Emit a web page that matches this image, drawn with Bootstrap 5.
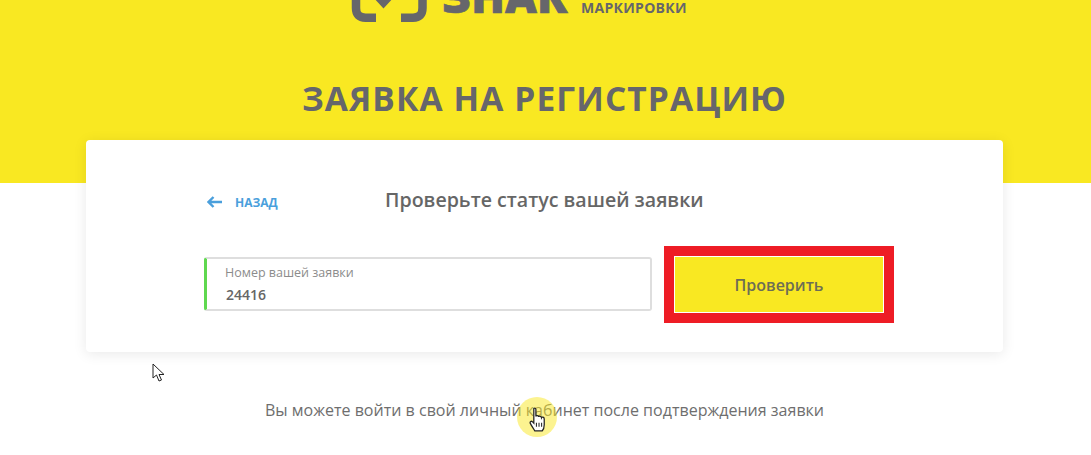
<!DOCTYPE html>
<html lang="ru">
<head>
    <meta charset="UTF-8">
    <meta name="viewport" content="width=device-width, initial-scale=1.0">
    <title>Заявка на регистрацию</title>
    <link href="https://cdn.jsdelivr.net/npm/bootstrap@5.3.0/dist/css/bootstrap.min.css" rel="stylesheet">
    <style>
        html, body { height: 455px; overflow: hidden; }
        body { font-family: "Open Sans", "Liberation Sans", sans-serif; color: #666; background: #fff; position: relative; }
        .hero { height: 183px; background: #f9e822; }
        .logo-strip { height: 22px; overflow: hidden; padding-left: 351px; gap: 15px; }
        .logo-word { font-size: 44px; font-weight: 800; line-height: 32px; color: #66666b; margin-bottom: 10px; flex: none; width: 125px; -webkit-text-stroke: .6px #66666b; }
        .logo-sub { font-size: 14px; font-weight: 700; line-height: 16px; letter-spacing: .3px; color: #66666b; margin-bottom: 6px; margin-left: -1px; white-space: nowrap; }
        .hero-title { font-size: 33.5px; font-weight: 700; letter-spacing: 1.1px; color: #66666b; line-height: 46px; margin: 53px 2px 0 0; }
        .form-panel { margin: -43px 88px 0 86px; height: 212px; border-radius: 4px; box-shadow: 0 2px 14px rgba(0, 0, 0, .09); padding: 48px 109px 0 118px; position: relative; }
        .back-link { width: 181px; font-size: 12px; font-weight: 700; color: #4a9fdc; text-decoration: none; padding: 5px 0 0 3px; gap: 13px; }
        .back-link svg { margin-bottom: 2px; }
        .panel-title { font-size: 19.6px; font-weight: 600; line-height: 26px; margin: -1px 0 0; color: #666; }
        .check-row { margin-top: 33px; }
        .status-field { width: 448px; height: 54px; margin-top: 11px; border: 2px solid #dedede; border-left: 3px solid #5fd84f; border-radius: 3px; padding: 5px 0 0 18px; }
        .status-field label { display: block; font-size: 12.5px; line-height: 17px; color: #8c8c8c; }
        .status-field input { display: block; width: 100%; border: 0; outline: 0; padding: 3px 0 0 1px; background: transparent; font-size: 14px; font-weight: 600; line-height: 22px; color: #666; }
        .check-frame { width: 230px; height: 77px; margin-left: 12px; border: 10px solid #ee1c25; flex: none; }
        .check-btn { width: 100%; height: 100%; border: 1px solid #fff; border-radius: 0; background: #f9e822; color: #6d6d55; font-size: 16px; font-weight: 600; padding: 1px 0 0; }
        .check-btn:hover { background: #f9e822; color: #6d6d55; }
        .after-note { font-size: 16.05px; line-height: 22px; margin: 47px 2px 0 0; color: #6e6e6e; }
        .click-spot { position: absolute; left: 517px; top: 397px; width: 40px; height: 40px; border-radius: 50%; background: rgba(249, 232, 34, .5); }
        .cursor-arrow { position: absolute; left: 152px; top: 363px; }
        .cursor-hand { position: absolute; left: 528px; top: 407px; }
    </style>
</head>
<body>
    <div class="hero">
        <div class="logo-strip d-flex align-items-end">
            <svg width="76" height="34" viewBox="0 0 76 34" class="flex-shrink-0" fill="none" stroke="#66666b" stroke-width="8.500">
                <path d="M5 0V20Q5 29.700 14.500 29.700H25"/>
                <path d="M71.500 0V20Q71.500 29.700 62 29.700H50"/>
                <path d="M26 9L32.500 16L39 9" stroke-width="6"/>
            </svg>
            <div class="logo-word">ЗНАК</div>
            <div class="logo-sub">МАРКИРОВКИ</div>
        </div>
        <h1 class="hero-title text-center">ЗАЯВКА НА РЕГИСТРАЦИЮ</h1>
    </div>

    <div class="form-panel bg-white">
        <div class="d-flex align-items-center">
            <a href="#" class="back-link d-flex align-items-center">
                <svg width="15" height="12" viewBox="0 0 15 12" fill="none" stroke="#4a9fdc" stroke-width="2.400">
                    <path d="M15 6H1.500M6.500 1L1.500 6L6.500 11"/>
                </svg>
                <span>НАЗАД</span>
            </a>
            <h2 class="panel-title">Проверьте статус вашей заявки</h2>
        </div>
        <div class="check-row d-flex align-items-start">
            <div class="status-field flex-shrink-0">
                <label for="order-number">Номер вашей заявки</label>
                <input id="order-number" type="text" value="24416">
            </div>
            <div class="check-frame">
                <button class="btn check-btn" type="button">Проверить</button>
            </div>
        </div>
    </div>

    <p class="after-note text-center">Вы можете войти в свой личный кабинет после подтверждения заявки</p>

    <div class="click-spot"></div>
    <svg class="cursor-arrow" width="14" height="20" viewBox="0 0 14 20">
        <path d="M1 1V15L4.500 12L7 18L9.500 17L7 11.500H12Z" fill="#fff" stroke="#222" stroke-width="1"/>
    </svg>
    <svg class="cursor-hand" width="21" height="25" viewBox="0 0 19 24">
        <path d="M5 1.500C6 .8 7 1.200 7 2.500V9C7.200 8 9.500 8 9.700 9.500C10 8.500 12.200 8.700 12.400 10.200C12.800 9.300 15 9.600 15 11.500V17C15 20 14 22 13 23H6C5 21 3 18.500 1.500 15.500C1 14 2.500 13 3.800 14.300L5 15.500Z" fill="#fff" stroke="#222" stroke-width="1.200"/>
        <path d="M7.500 15V19M10 15V19M12.500 15V19" stroke="#222" stroke-width="1"/>
    </svg>

    <script src="https://cdn.jsdelivr.net/npm/bootstrap@5.3.0/dist/js/bootstrap.bundle.min.js"></script>
</body>
</html>
